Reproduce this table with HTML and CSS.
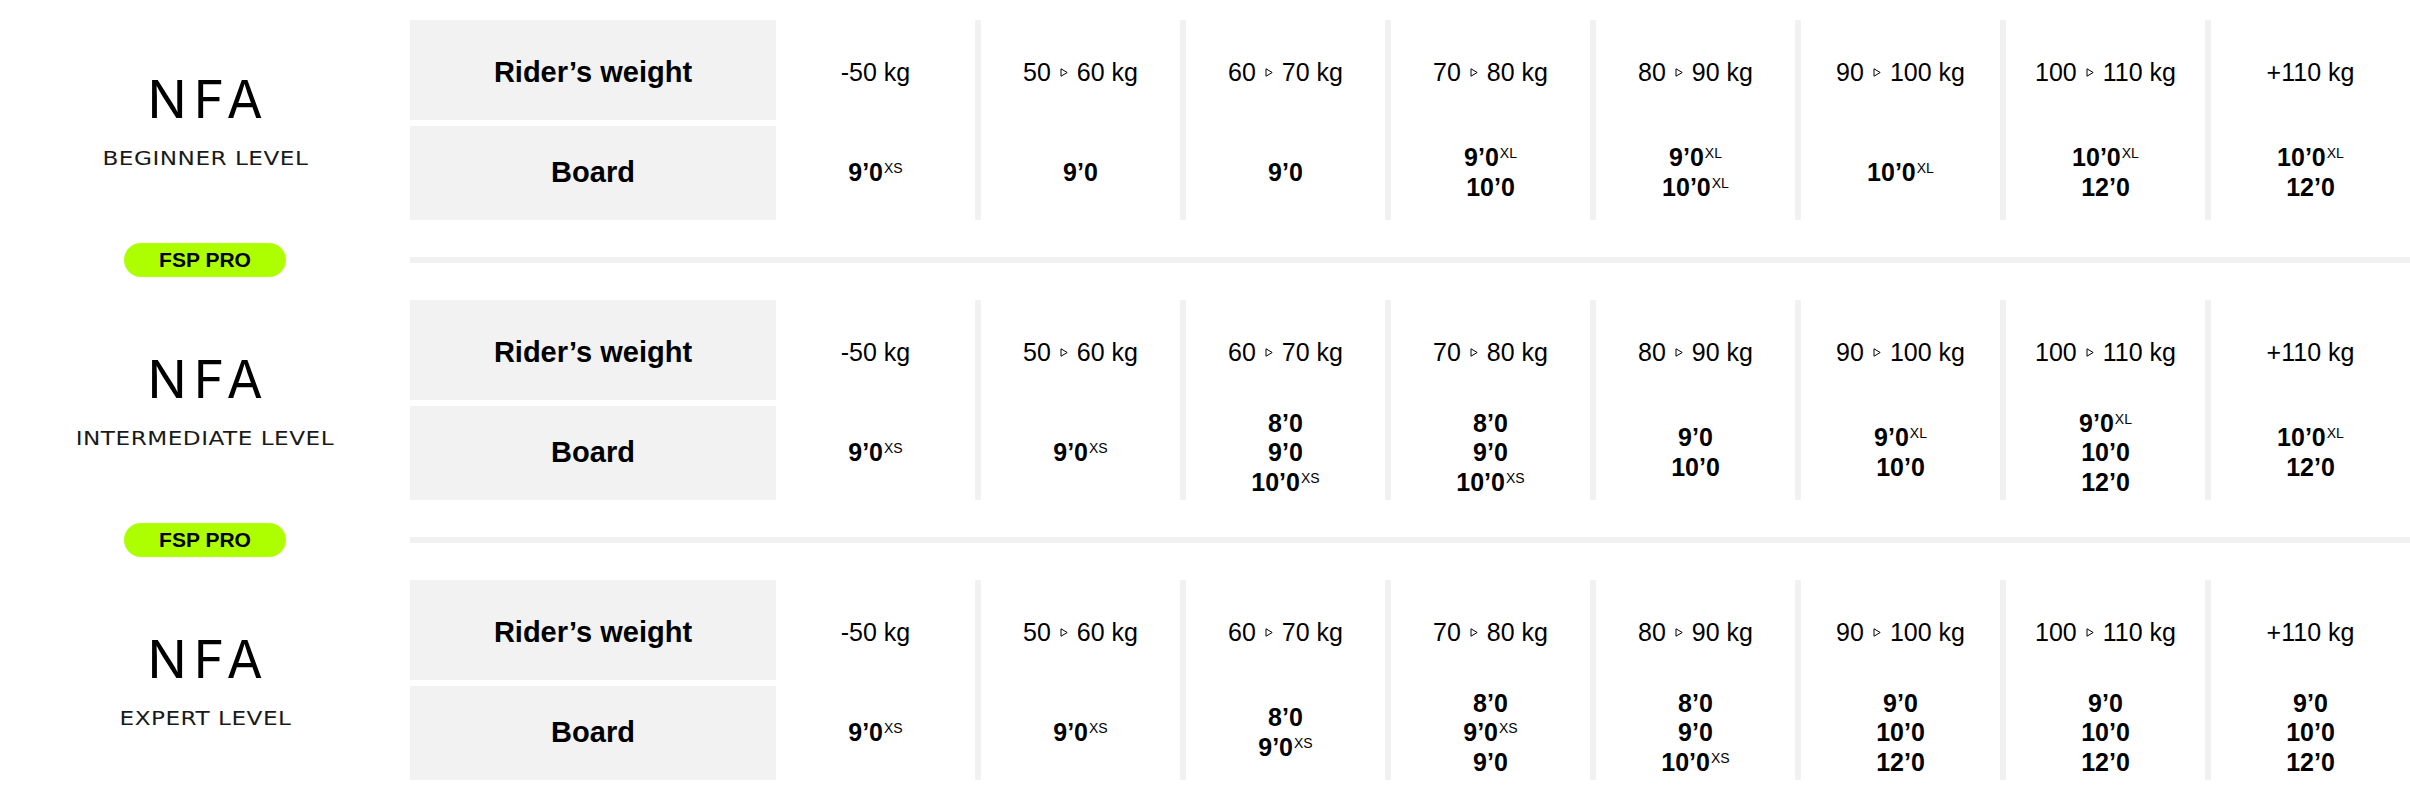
FILE: index.html
```html
<!DOCTYPE html>
<html lang="en">
<head>
<meta charset="utf-8">
<title>NFA size chart</title>
<link rel="stylesheet" href="styles.css">
</head>
<body>
<main class="chart">

  <section class="level">
    <div class="level-info">
      <div class="brand">NFA</div>
      <div class="level-name">BEGINNER LEVEL</div>
    </div>
    <div class="labels">
      <div class="label-cell top">Rider’s weight</div>
      <div class="label-cell">Board</div>
    </div>
    <div class="col"><div class="cell top">-50 kg</div><div class="cell board"><span>9’0<sup class="sz">XS</sup></span></div></div>
    <div class="col"><div class="cell top">50<svg class="arrow" viewBox="0 0 8 9" width="8" height="9"><path d="M1 0.8 L7.2 4.5 L1 8.2 Z"/></svg>60 kg</div><div class="cell board"><span>9’0</span></div></div>
    <div class="col"><div class="cell top">60<svg class="arrow" viewBox="0 0 8 9" width="8" height="9"><path d="M1 0.8 L7.2 4.5 L1 8.2 Z"/></svg>70 kg</div><div class="cell board"><span>9’0</span></div></div>
    <div class="col"><div class="cell top">70<svg class="arrow" viewBox="0 0 8 9" width="8" height="9"><path d="M1 0.8 L7.2 4.5 L1 8.2 Z"/></svg>80 kg</div><div class="cell board"><span>9’0<sup class="sz">XL</sup></span><span>10’0</span></div></div>
    <div class="col"><div class="cell top">80<svg class="arrow" viewBox="0 0 8 9" width="8" height="9"><path d="M1 0.8 L7.2 4.5 L1 8.2 Z"/></svg>90 kg</div><div class="cell board"><span>9’0<sup class="sz">XL</sup></span><span>10’0<sup class="sz">XL</sup></span></div></div>
    <div class="col"><div class="cell top">90<svg class="arrow" viewBox="0 0 8 9" width="8" height="9"><path d="M1 0.8 L7.2 4.5 L1 8.2 Z"/></svg>100 kg</div><div class="cell board"><span>10’0<sup class="sz">XL</sup></span></div></div>
    <div class="col"><div class="cell top">100<svg class="arrow" viewBox="0 0 8 9" width="8" height="9"><path d="M1 0.8 L7.2 4.5 L1 8.2 Z"/></svg>110 kg</div><div class="cell board"><span>10’0<sup class="sz">XL</sup></span><span>12’0</span></div></div>
    <div class="col"><div class="cell top">+110 kg</div><div class="cell board"><span>10’0<sup class="sz">XL</sup></span><span>12’0</span></div></div>
  </section>

  <div class="divider">
    <div class="divider-left"><span class="pill">FSP PRO</span></div>
    <div class="divider-line"></div>
  </div>

  <section class="level">
    <div class="level-info">
      <div class="brand">NFA</div>
      <div class="level-name">INTERMEDIATE LEVEL</div>
    </div>
    <div class="labels">
      <div class="label-cell top">Rider’s weight</div>
      <div class="label-cell">Board</div>
    </div>
    <div class="col"><div class="cell top">-50 kg</div><div class="cell board"><span>9’0<sup class="sz">XS</sup></span></div></div>
    <div class="col"><div class="cell top">50<svg class="arrow" viewBox="0 0 8 9" width="8" height="9"><path d="M1 0.8 L7.2 4.5 L1 8.2 Z"/></svg>60 kg</div><div class="cell board"><span>9’0<sup class="sz">XS</sup></span></div></div>
    <div class="col"><div class="cell top">60<svg class="arrow" viewBox="0 0 8 9" width="8" height="9"><path d="M1 0.8 L7.2 4.5 L1 8.2 Z"/></svg>70 kg</div><div class="cell board"><span>8’0</span><span>9’0</span><span>10’0<sup class="sz">XS</sup></span></div></div>
    <div class="col"><div class="cell top">70<svg class="arrow" viewBox="0 0 8 9" width="8" height="9"><path d="M1 0.8 L7.2 4.5 L1 8.2 Z"/></svg>80 kg</div><div class="cell board"><span>8’0</span><span>9’0</span><span>10’0<sup class="sz">XS</sup></span></div></div>
    <div class="col"><div class="cell top">80<svg class="arrow" viewBox="0 0 8 9" width="8" height="9"><path d="M1 0.8 L7.2 4.5 L1 8.2 Z"/></svg>90 kg</div><div class="cell board"><span>9’0</span><span>10’0</span></div></div>
    <div class="col"><div class="cell top">90<svg class="arrow" viewBox="0 0 8 9" width="8" height="9"><path d="M1 0.8 L7.2 4.5 L1 8.2 Z"/></svg>100 kg</div><div class="cell board"><span>9’0<sup class="sz">XL</sup></span><span>10’0</span></div></div>
    <div class="col"><div class="cell top">100<svg class="arrow" viewBox="0 0 8 9" width="8" height="9"><path d="M1 0.8 L7.2 4.5 L1 8.2 Z"/></svg>110 kg</div><div class="cell board"><span>9’0<sup class="sz">XL</sup></span><span>10’0</span><span>12’0</span></div></div>
    <div class="col"><div class="cell top">+110 kg</div><div class="cell board"><span>10’0<sup class="sz">XL</sup></span><span>12’0</span></div></div>
  </section>

  <div class="divider">
    <div class="divider-left"><span class="pill">FSP PRO</span></div>
    <div class="divider-line"></div>
  </div>

  <section class="level">
    <div class="level-info">
      <div class="brand">NFA</div>
      <div class="level-name">EXPERT LEVEL</div>
    </div>
    <div class="labels">
      <div class="label-cell top">Rider’s weight</div>
      <div class="label-cell">Board</div>
    </div>
    <div class="col"><div class="cell top">-50 kg</div><div class="cell board"><span>9’0<sup class="sz">XS</sup></span></div></div>
    <div class="col"><div class="cell top">50<svg class="arrow" viewBox="0 0 8 9" width="8" height="9"><path d="M1 0.8 L7.2 4.5 L1 8.2 Z"/></svg>60 kg</div><div class="cell board"><span>9’0<sup class="sz">XS</sup></span></div></div>
    <div class="col"><div class="cell top">60<svg class="arrow" viewBox="0 0 8 9" width="8" height="9"><path d="M1 0.8 L7.2 4.5 L1 8.2 Z"/></svg>70 kg</div><div class="cell board"><span>8’0</span><span>9’0<sup class="sz">XS</sup></span></div></div>
    <div class="col"><div class="cell top">70<svg class="arrow" viewBox="0 0 8 9" width="8" height="9"><path d="M1 0.8 L7.2 4.5 L1 8.2 Z"/></svg>80 kg</div><div class="cell board"><span>8’0</span><span>9’0<sup class="sz">XS</sup></span><span>9’0</span></div></div>
    <div class="col"><div class="cell top">80<svg class="arrow" viewBox="0 0 8 9" width="8" height="9"><path d="M1 0.8 L7.2 4.5 L1 8.2 Z"/></svg>90 kg</div><div class="cell board"><span>8’0</span><span>9’0</span><span>10’0<sup class="sz">XS</sup></span></div></div>
    <div class="col"><div class="cell top">90<svg class="arrow" viewBox="0 0 8 9" width="8" height="9"><path d="M1 0.8 L7.2 4.5 L1 8.2 Z"/></svg>100 kg</div><div class="cell board"><span>9’0</span><span>10’0</span><span>12’0</span></div></div>
    <div class="col"><div class="cell top">100<svg class="arrow" viewBox="0 0 8 9" width="8" height="9"><path d="M1 0.8 L7.2 4.5 L1 8.2 Z"/></svg>110 kg</div><div class="cell board"><span>9’0</span><span>10’0</span><span>12’0</span></div></div>
    <div class="col"><div class="cell top">+110 kg</div><div class="cell board"><span>9’0</span><span>10’0</span><span>12’0</span></div></div>
  </section>

</main>
</body>
</html>
```
FILE: styles.css
```css
html, body {
  margin: 0;
  padding: 0;
  background: #ffffff;
}

body {
  font-family: "Liberation Sans", Arial, sans-serif;
  color: #000;
}

.chart {
  padding-top: 20px;
  display: flex;
  flex-direction: column;
}

.level {
  display: flex;
  height: 200px;
}

.level-info {
  width: 410px;
  flex: none;
  display: flex;
  flex-direction: column;
  align-items: center;
  justify-content: center;
  padding-top: 2px;
  box-sizing: border-box;
}

.brand {
  font-family: "Inter", "Liberation Sans", sans-serif;
  font-weight: 400;
  font-size: 52px;
  line-height: 52px;
  letter-spacing: 7px;
  margin-right: -7px;
  color: #000;
}

.level-name {
  font-family: "DejaVu Sans", sans-serif;
  font-size: 19px;
  line-height: 20px;
  letter-spacing: 0.4px;
  margin-top: 22px;
  color: #1a1a1a;
  white-space: nowrap;
  transform: scaleX(1.22);
}

.labels {
  width: 366px;
  flex: none;
  display: flex;
  flex-direction: column;
  gap: 6px;
}

.label-cell {
  flex: 1;
  background: #f2f2f2;
  display: flex;
  align-items: center;
  justify-content: center;
  font-size: 29px;
  font-weight: 700;
}

.col {
  flex: 1 1 0;
  display: flex;
  flex-direction: column;
  gap: 6px;
}

.col + .col {
  border-left: 6px solid #f1f1f1;
}

.cell {
  flex: 1;
  display: flex;
  align-items: center;
  justify-content: center;
  text-align: center;
}

.top {
  padding-top: 5px;
}

.cell.top {
  font-size: 25px;
  font-weight: 400;
  white-space: nowrap;
}

.arrow {
  width: 8px;
  height: 9px;
  margin: 0 9px;
  vertical-align: 3px;
}

.arrow path {
  fill: none;
  stroke: #000;
  stroke-width: 1;
  stroke-linejoin: miter;
}

.board {
  flex-direction: column;
  font-size: 25px;
  font-weight: 700;
  line-height: 29.5px;
}

.board span {
  display: block;
  white-space: nowrap;
}

.sz {
  font-size: 14px;
  font-weight: 400;
  line-height: 0;
  vertical-align: 8px;
  margin-left: 1px;
}

.divider {
  display: flex;
  align-items: center;
  height: 34px;
  margin: 23px 0;
}

.divider-left {
  width: 410px;
  flex: none;
  display: flex;
  justify-content: center;
}

.pill {
  display: flex;
  align-items: center;
  justify-content: center;
  width: 162px;
  height: 34px;
  border-radius: 17px;
  background: #adff00;
  font-size: 21px;
  font-weight: 700;
  color: #000;
}

.divider-line {
  flex: 1;
  height: 6px;
  background: #f1f1f1;
}
```
